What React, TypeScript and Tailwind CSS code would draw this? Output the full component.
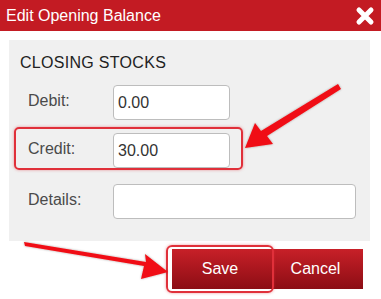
import React from 'react';

const font = { fontFamily: '"Liberation Sans", Arial, sans-serif' };

function Row({ label, value, wide }: { label: string; value: string; wide?: boolean }) {
  return (
    <div className="flex items-center">
      <div className="w-[93px] pl-[8px] pb-[3px] text-[16px] text-[#4a4a4a]">{label}</div>
      <div
        className={`${wide ? 'w-[243px]' : 'w-[117px]'} h-[35px] bg-white border border-[#bdbdbd] rounded-[4px] flex items-center px-[4px] text-[16px] text-[#333]`}
      >
        {value}
      </div>
    </div>
  );
}

export default function App() {
  return (
    <div className="relative w-[381px] h-[299px] bg-white overflow-hidden" style={font}>
      <div className="h-[31px] bg-[#c31b23] flex items-center justify-between pl-[6px] pr-[6px]">
        <span className="text-white text-[16px]">Edit Opening Balance</span>
        <svg width="20" height="20" viewBox="0 0 20 20">
          <path d="M4 4 L16 16 M16 4 L4 16" stroke="white" strokeWidth="5" strokeLinecap="round" />
        </svg>
      </div>

      <div className="mt-[9px] ml-[9px] w-[361px] h-[201px] bg-[#f0f0f0] pl-[11px] pt-[11px]">
        <div className="text-[16px] text-[#222] tracking-[0.3px]">CLOSING STOCKS</div>
        <div className="mt-[10px] flex flex-col gap-[13px]">
          <Row label="Debit:" value="0.00" />
          <div className="relative">
            <Row label="Credit:" value="30.00" />
            <div className="absolute left-[-6px] top-[-6px] w-[229px] h-[43px] border-2 border-[#e0303a] rounded-[5px] shadow-[0_0_3px_rgba(224,48,58,0.5)]" />
          </div>
          <div className="mt-[3px]">
            <Row label="Details:" value="" wide />
          </div>
        </div>
      </div>

      <div className="mt-[8px] flex justify-end pr-[18px]">
        <div className="relative">
          <button className="w-[96px] h-[40px] text-white text-[16px] bg-gradient-to-b from-[#c82028] to-[#8c0d14]">
            Save
          </button>
          <div className="absolute left-[-6px] top-[-4px] w-[108px] h-[48px] border-2 border-[#e0303a] rounded-[6px] shadow-[0_0_3px_rgba(224,48,58,0.5)]" />
        </div>
        <button className="w-[95px] h-[40px] text-white text-[16px] bg-gradient-to-b from-[#c82028] to-[#8c0d14]">
          Cancel
        </button>
      </div>

      <svg className="absolute inset-0 pointer-events-none" width="381" height="299" viewBox="0 0 381 299">
        <defs>
          <filter id="sh" x="-20%" y="-20%" width="140%" height="140%">
            <feDropShadow dx="0" dy="0" stdDeviation="1.2" floodColor="#000" floodOpacity="0.35" />
          </filter>
        </defs>
        <path
          d="M338 84 L341 89 L267 136 L273 144 L245 148 L255 123 L261 131 Z"
          fill="#f00f14"
          filter="url(#sh)"
        />
        <path
          d="M24 242 L25 246 L144 266 L141 279 L168 272 L145 254 L146 262 Z"
          fill="#f00f14"
          filter="url(#sh)"
        />
      </svg>
    </div>
  );
}
